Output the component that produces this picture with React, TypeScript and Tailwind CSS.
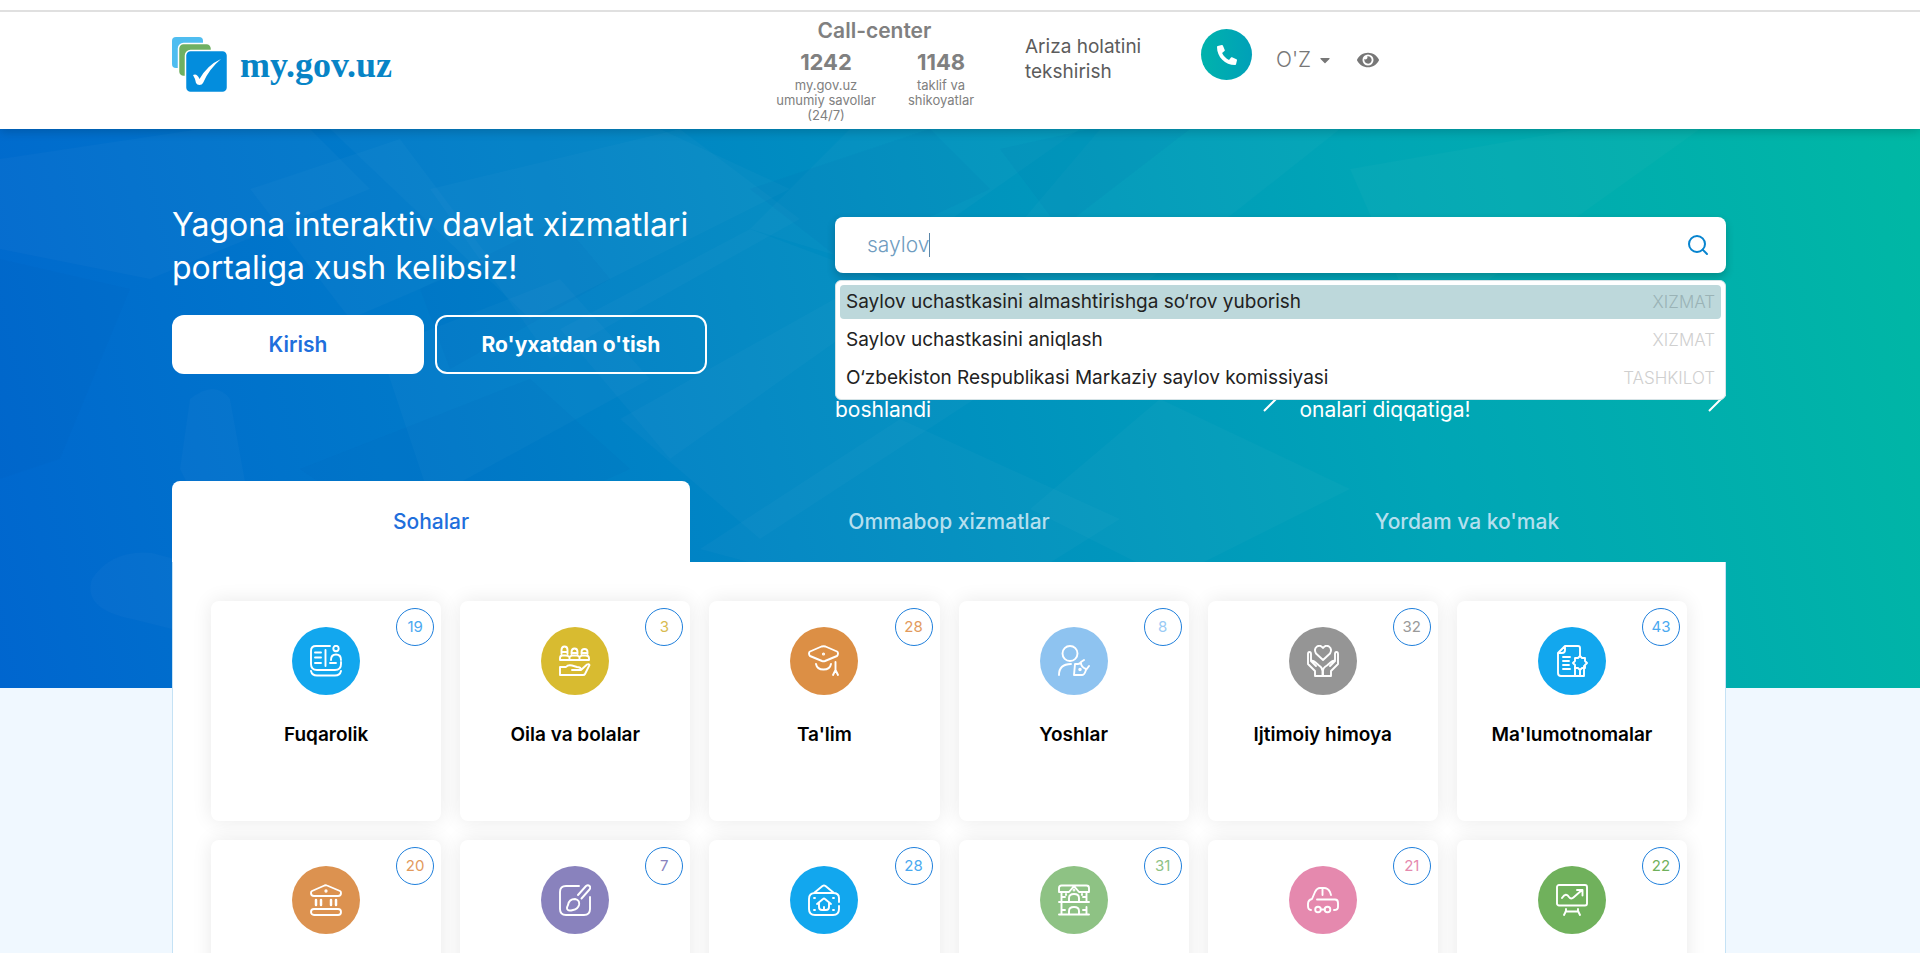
import React, { useState } from "react";
import { Search } from "lucide-react";
import { FaCaretDown, FaEye, FaPhone } from "react-icons/fa";

type Category = {
  title?: string;
  count: number;
  bg: string;
  text: string;
  icon: React.ReactNode;
};

const categories: Category[] = [
  {
    title: "Fuqarolik",
    count: 19,
    bg: "bg-[#12a7ee]",
    text: "text-[#4aa9f0]",
    icon: (
      <>
        <path d="M20 1H6Q1 1 1 6v13q0 6 6 6h18q6 0 6-6v-2" />
        <path d="M5 7.500h6M5 12.500h6M5 18h6M15.500 5v16M20 18h6M1 26q1 4.500 6 4.500h18q5 0 6-4.500" />
        <circle cx="26" cy="3.500" r="2.700" />
        <path d="M21 15q0-5.500 5-5.500t5 5.500" />
      </>
    ),
  },
  {
    title: "Oila va bolalar",
    count: 3,
    bg: "bg-[#d8bb30]",
    text: "text-[#d8bb50]",
    icon: (
      <>
        <path d="M2.500 9V5q0-3.500 3-3.500t3 3.500v4M2.500 7h6M12.500 9V7q0-3.500 3-3.500t3 3.500v2M12.500 8h6M22.500 9V7q0-3 3-3t3 3v2M22.500 8h6" />
        <path d="M1 15v-2q0-2.500 2.500-2.500h3Q9 10.500 10.500 12q1.500-1.500 3-1.500h4q1.500 0 3 1.500 1.500-1.500 3-1.500h3q3.500 0 3.500 2.500v2zM10.500 12v3M20.500 12v3" />
        <path d="M1 30v-8h6q2-2.500 6-1.500l5 1.500q4 0 4 3h-9M22 25l6-5.500q2-1 2.500.500L26 29q-.500 1-2 1H1" />
      </>
    ),
  },
  {
    title: "Ta'lim",
    count: 28,
    bg: "bg-[#dc8f45]",
    text: "text-[#e29a5c]",
    icon: (
      <>
        <path d="M13.500 1.500 2 6.500Q1 7 1 8.500t1 2.500l12 5q1.500.500 3 0l12-5q1-1 1-2.500t-1-2l-11.500-5q-1.500-.500-4 0zM8 19q1 5.500 7.500 5.500T23 19M27.500 17v9M27.500 25l-2.500 5M27.500 25l2.500 5" />
        <circle cx="15.500" cy="9" r="0.600" />
      </>
    ),
  },
  {
    title: "Yoshlar",
    count: 8,
    bg: "bg-[#8ec3f0]",
    text: "text-[#9acbf5]",
    icon: (
      <>
        <circle cx="12" cy="8.500" r="7.500" />
        <path d="M1 30q0-11 12-11M16 30l1-11h3q2 0 3-2l3-2M16 30h8q2 0 3-2.500l1-2.500 3-4M23 18q0 4 5 6" />
        <circle cx="22" cy="24.500" r="0.800" />
      </>
    ),
  },
  {
    title: "Ijtimoiy himoya",
    count: 32,
    bg: "bg-[#959595]",
    text: "text-[#9a9a9a]",
    icon: (
      <>
        <path d="m16 15-7-6.500Q6.500 4 10 1.500q3.500-2 6 1.500 2.500-3.500 6-1.500 3.500 2.500 1 7z" />
        <path d="M8 31v-5L1 19V9q0-2 1.500-2T4 9v7l5 5M4 16q2-1 4 1l4 3.500q3.500 2 3.500 5.500v5H8M24 31v-5l7-7V9q0-2-1.500-2T28 9v7l-5 5M28 16q-2-1-4 1l-4 3.500q-4 2-4 5.500v5h8" />
      </>
    ),
  },
  {
    title: "Ma'lumotnomalar",
    count: 43,
    bg: "bg-[#12a7ee]",
    text: "text-[#4aa9f0]",
    icon: (
      <>
        <path d="M9 1h13q2 0 2 2v8M9 1 2 8v20q0 3 3 3h23V21M9 1v4q0 3-3 3H2M7 12h7M7 16h6M7 20h6M7 24h7M19 31v-9" />
        <path d="m24 11 2 2h3v3l2 2-2 2v3h-3l-2 2-2-2h-3v-3l-2-2 2-2v-3h3zM24 26v5" />
      </>
    ),
  },
  {
    count: 20,
    bg: "bg-[#dc9250]",
    text: "text-[#e29a5c]",
    icon: (
      <>
        <path d="M14.500 1.500 2 7q-1 .500-1 2 0 3 3 3h24q3 0 3-3 0-1.500-1-2L17 1.500q-1-.500-2.500 0z" />
        <path d="M6 16v5M11 16v5M21 16v5M26 16v5" strokeWidth="2.500" />
        <rect x="1" y="25" width="30" height="6" rx="3" />
        <circle cx="16" cy="7" r="0.700" />
      </>
    ),
  },
  {
    count: 7,
    bg: "bg-[#8982bd]",
    text: "text-[#8982bd]",
    icon: (
      <>
        <path d="M20 2H7Q1 2 1 8v17q0 6 6 6h18q6 0 6-6V13" />
        <path d="m19 11 8-9q2-1.500 3.500 0t0 3.500l-8 9M9 26q-2-1 0-5 1-6 7-6 5 1 4 6-1 4-6 5-4 1-5 0z" />
      </>
    ),
  },
  {
    count: 28,
    bg: "bg-[#12a7ee]",
    text: "text-[#4aa9f0]",
    icon: (
      <>
        <path d="M31 18v-4q0-5-6-5H7Q1 9 1 15v10q0 6 6 6h18q6 0 6-6v-3M6 9l8.500-7q1.500-1 3 0L26 9" />
        <path d="m9 20 6-5q1-1 2 0l6 5M11 19v4q0 3 3 3h4q3 0 3-3v-4M16 23v3" />
        <path d="M6 14h1M25 14h1M6 26h1M25 26h1" />
      </>
    ),
  },
  {
    count: 31,
    bg: "bg-[#8ec284]",
    text: "text-[#8ec284]",
    icon: (
      <>
        <path d="M1 8V4q0-2.500 2.500-2.500h25Q31 1.500 31 4v4H21l-5-6-5 6zM1 18h30M1 30.500h30M3.500 8v10M28.500 8v10M3.500 18v12M28.500 23v7M11 18v-4q0-4 5-4t5 4v4M11 30v-3q0-4 5-4t5 4v3M3.500 13H7M25 13h3.500M3.500 26H7M25 26h3.500M8 10v1M24 10v1" />
        <circle cx="16" cy="6" r="0.500" />
      </>
    ),
  },
  {
    count: 21,
    bg: "bg-[#e589ae]",
    text: "text-[#e589ae]",
    icon: (
      <>
        <path d="M10 15.500h18q3 0 3 3.500v4q0 3-4 3M4 26q-3 0-3-4v-2q0-4 4-5l3-7q2-4 5-4h4q4 0 6 4l1 3M15.500 4v7M14 25.500h3.500" />
        <circle cx="11" cy="25.500" r="2.800" />
        <circle cx="20.500" cy="25.500" r="2.800" />
      </>
    ),
  },
  {
    count: 22,
    bg: "bg-[#70b15c]",
    text: "text-[#70b15c]",
    icon: (
      <>
        <rect x="1" y="1" width="30" height="20.500" rx="2" />
        <path d="M6 14q4-6 7-1 2 3 5 0l8-7M21 6h5.500v5.500M10 25v2l-2 4M22 25v2l2 4M9.500 27.500h13" />
      </>
    ),
  },
];

const suggestions = [
  { title: "Saylov uchastkasini almashtirishga so‘rov yuborish", kind: "XIZMAT" },
  { title: "Saylov uchastkasini aniqlash", kind: "XIZMAT" },
  { title: "O‘zbekiston Respublikasi Markaziy saylov komissiyasi", kind: "TASHKILOT" },
];

const tabs = ["Sohalar", "Ommabop xizmatlar", "Yordam va ko'mak"];

function Logo() {
  return (
    <a href="#" className="flex items-center gap-3">
      <svg width="56" height="56" viewBox="0 0 56 56" aria-hidden="true">
        <rect x="0" y="0" width="31" height="31" rx="4" fill="#4fbdf0" />
        <rect x="6.500" y="6.500" width="33" height="33" rx="5" fill="#6fb062" stroke="#fff" strokeWidth="1.500" />
        <rect x="13.500" y="13.500" width="42" height="42" rx="5" fill="#038ddd" stroke="#fff" strokeWidth="1.500" />
        <path d="M21 38q4-2 6.500 4 8-14 21.500-20Q37 32 31 46q-1 2-3.500 2T24 46q-1-5-3-8z" fill="#fff" />
      </svg>
      <span className="font-['Liberation_Serif',serif] text-[36px] leading-10 font-bold text-[#0784c6]">my.gov.uz</span>
    </a>
  );
}

function Header() {
  return (
    <header className="relative z-10 bg-white pt-[10px] shadow-[0_2px_10px_rgba(0,0,0,0.2)]">
      <div className="border-t-2 border-[#e0e0e0] pr-[22px]">
        <div className="mx-auto flex min-h-[117px] max-w-[1554px] items-start">
          <div className="w-[600px] shrink-0 pt-[25px]">
            <Logo />
          </div>
          <div className="w-[205px] pt-1 text-center text-[#808080]">
            <p className="text-[21px] leading-[30px] font-semibold">Call-center</p>
            <div className="flex justify-between">
              <div className="w-[108px]">
                <p className="text-[22px] leading-8 font-bold">1242</p>
                <p className="text-[13px] leading-[15px]">
                  my.gov.uz
                  <br />
                  umumiy savollar
                  <br />
                  (24/7)
                </p>
              </div>
              <div className="w-[72px]">
                <p className="text-[22px] leading-8 font-bold">1148</p>
                <p className="text-[13px] leading-[15px]">
                  taklif va
                  <br />
                  shikoyatlar
                </p>
              </div>
            </div>
          </div>
          <a href="#" className="ml-12 w-[176px] pt-[22px] text-[19px] leading-[25px] text-[#5c5c5c]">
            Ariza holatini
            <br />
            tekshirish
          </a>
          <button
            aria-label="Qo'ng'iroq"
            className="mt-[17px] flex h-[51px] w-[51px] items-center justify-center rounded-full bg-gradient-to-r from-[#00b3ac] to-[#00a0b8] text-white"
          >
            <FaPhone className="h-5 w-5 -scale-x-100" />
          </button>
          <button className="mt-[33px] ml-6 flex items-center gap-1.5 text-[21px] leading-[30px] font-light text-[#777]">
            O'Z
            <FaCaretDown className="h-4 w-4" />
          </button>
          <button aria-label="Maxsus imkoniyatlar" className="mt-[37px] ml-6 text-[#777]">
            <FaEye className="h-[22px] w-[22px]" />
          </button>
        </div>
      </div>
    </header>
  );
}

// faint shards behind the hero text
function HeroTexture() {
  return (
    <svg className="absolute inset-0 h-full w-full" viewBox="0 0 1920 559" preserveAspectRatio="none" aria-hidden="true">
      <g fill="#fff" fillOpacity="0.025">
        <path d="M0 30 200 0h110l60 60-220 90L0 120z" />
        <path d="m250 60 150-50 90 120-140 60z" />
        <path d="m330 0 330 0 130 60-260 130z" />
        <path d="m430 60 250-60 120 90-250 140z" />
        <path d="m380 220 180-70 90 100-220 120z" />
        <path d="m560 200 190-100 160 60-240 170z" />
        <path d="m620 290 250-140 120 110-230 150z" />
        <path d="m850 0 230 0-200 140-130-40z" />
        <path d="m1100 0 240 0-240 190-110-60z" />
        <path d="m1350 40 230-40h120l-280 200z" />
        <path d="m190 270q25-20 40 0l20 110-40 20-30-60z" />
        <path d="m92 450q20-30 60-26l60 16v70l-80-20q-50-10-40-40z" />
        <path d="m700 420 200-130 220 100-160 100z" />
        <path d="m1030 380 130-110 190 90-180 90z" />
      </g>
      <g fill="#0050b0" fillOpacity="0.06">
        <path d="M0 130 130 160 60 330 0 350z" />
        <path d="m420 160 140-70 50 60-160 90z" />
        <path d="m300 340 230-90 100 90-200 90z" />
        <path d="m750 60 180-60 60 60-150 70z" />
        <path d="m1000 20 90-20 100 0-130 100z" />
      </g>
    </svg>
  );
}

function SearchBox() {
  const [query, setQuery] = useState("saylov");

  return (
    <div className="relative">
      <div className="flex h-14 items-center rounded-lg bg-white pr-4 pl-8 shadow-[0_4px_8px_rgba(0,0,0,0.2)]">
        <label className="flex flex-1 cursor-text items-center">
          <input
            aria-label="Qidiruv"
            value={query}
            onChange={(e) => setQuery(e.target.value)}
            className="field-sizing-content bg-transparent text-[21px] font-light text-[#6f9cc0] caret-transparent outline-none"
          />
          <span className="h-6 w-px bg-[#5b86a8]" />
        </label>
        <button aria-label="Qidirish" className="text-[#0784cf]">
          <Search className="h-6 w-6" />
        </button>
      </div>
      <ul className="absolute inset-x-0 top-full z-10 mt-[7px] rounded-md border border-[#d5e3e6] bg-white p-1">
        {suggestions.map((s, i) => (
          <li
            key={s.title}
            className={`flex h-[34px] items-center justify-between rounded px-[6px] not-last:mb-1 ${i === 0 ? "bg-[#bdd8db]" : ""}`}
          >
            <a href="#" className="text-[19px] leading-6 text-[#222]">
              {s.title}
            </a>
            <span className={`text-[17px] leading-6 font-light ${i === 0 ? "text-[#9ab3b6]" : "text-[#cfcfcf]"}`}>
              {s.kind}
            </span>
          </li>
        ))}
      </ul>
    </div>
  );
}

function NewsItem({ text }: { text: string }) {
  return (
    <a href="#" className="flex items-end justify-between text-[21px] leading-7 text-white">
      {text}
      <svg width="18" height="34" viewBox="0 0 18 34" fill="none" stroke="currentColor" strokeWidth="2" className="mb-3">
        <path d="M1 1l16 16L1 33" />
      </svg>
    </a>
  );
}

function CategoryCard({ item }: { item: Category }) {
  return (
    <a
      href="#"
      className="relative flex h-[220px] flex-col items-center rounded-lg bg-white pt-[26px] shadow-[0_0_20px_rgba(0,0,0,0.09)]"
    >
      <span
        className={`absolute top-[7px] right-[7px] flex h-[38px] w-[38px] items-center justify-center rounded-full border border-[#1f7fdc] text-[15px] ${item.text}`}
      >
        {item.count}
      </span>
      <span className={`flex h-[68px] w-[68px] items-center justify-center rounded-full ${item.bg}`}>
        <svg
          className="h-8 w-8"
          viewBox="0 0 32 32"
          fill="none"
          stroke="#fff"
          strokeWidth="1.900"
          strokeLinecap="round"
          strokeLinejoin="round"
          aria-hidden="true"
        >
          {item.icon}
        </svg>
      </span>
      {item.title && <span className="mt-7 text-[19px] leading-6 font-semibold text-black">{item.title}</span>}
    </a>
  );
}

export default function App() {
  const [active, setActive] = useState(0);

  return (
    <div className="min-h-screen bg-[#f0f8ff] font-['Inter',sans-serif]">
      <Header />

      <section className="relative bg-[linear-gradient(76deg,#0066cf_0%,#007ac9_25%,#008fc0_48%,#00a5b6_72%,#00b8a4_100%)] pr-[22px] pb-[126px]">
        <HeroTexture />
        <div className="relative mx-auto max-w-[1554px]">
          <div className="flex min-h-[352px] items-start justify-between">
            <div className="pt-[74px]">
              <h1 className="text-[32px] leading-[43px] text-white">
                Yagona interaktiv davlat xizmatlari
                <br />
                portaliga xush kelibsiz!
              </h1>
              <div className="mt-[26px] flex gap-[11px]">
                <button className="h-[59px] w-[252px] rounded-xl bg-white text-[21px] font-semibold text-[#1f6fdc]">
                  Kirish
                </button>
                <button className="h-[59px] w-[272px] rounded-xl border-2 border-white text-[21px] font-bold text-white">
                  Ro'yxatdan o'tish
                </button>
              </div>
            </div>
            <div className="w-[891px] pt-[88px]">
              <SearchBox />
              <div className="mt-[105px] grid grid-cols-2">
                <NewsItem text="boshlandi" />
                <div className="pl-[19px]">
                  <NewsItem text="onalari diqqatiga!" />
                </div>
              </div>
            </div>
          </div>

          <div role="tablist" className="grid grid-cols-3">
            {tabs.map((tab, i) => (
              <button
                key={tab}
                role="tab"
                aria-selected={i === active}
                onClick={() => setActive(i)}
                className={`h-[81px] rounded-t-lg text-[21px] font-medium ${
                  i === active ? "bg-white text-[#1f6fdc]" : "text-[#b5dfee]"
                }`}
              >
                {tab}
              </button>
            ))}
          </div>
        </div>
      </section>

      <main className="relative -mt-[126px] pr-[22px]">
        <div className="mx-auto grid max-w-[1554px] grid-cols-6 gap-[19px] border-x border-[#c5e2f5] bg-white px-[38px] pt-[39px] pb-10">
          {categories.map((item) => (
            <CategoryCard key={item.bg + item.count} item={item} />
          ))}
        </div>
      </main>
    </div>
  );
}
